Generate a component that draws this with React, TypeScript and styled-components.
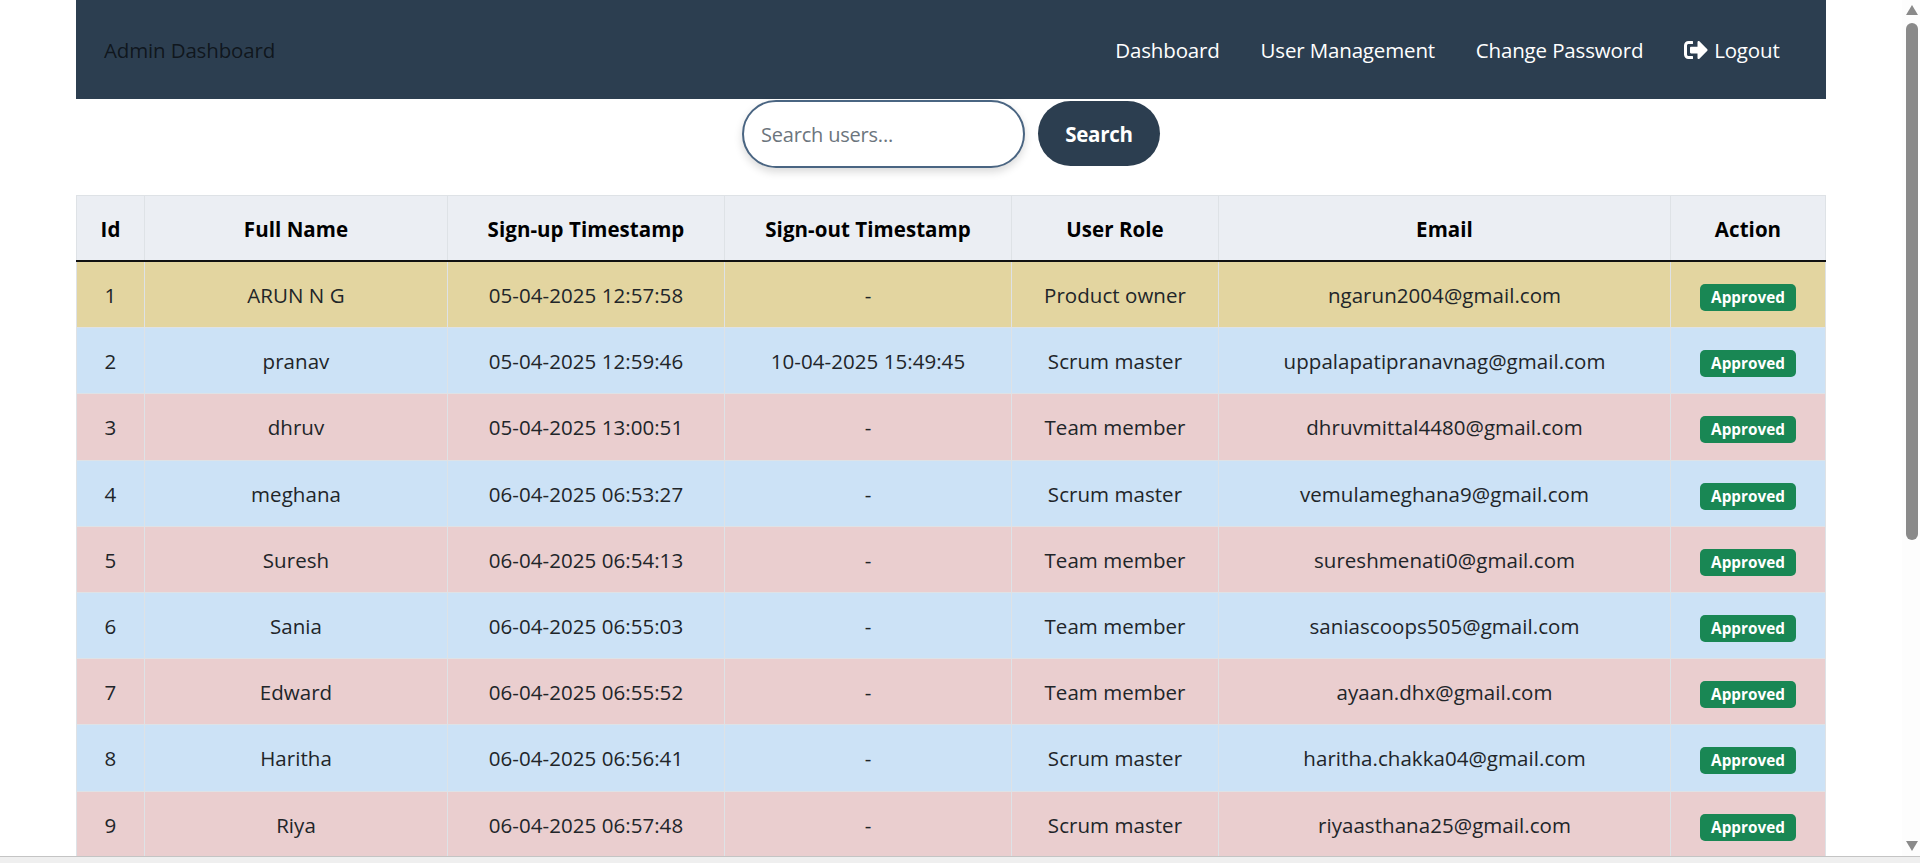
import React from "react";
import styled, { createGlobalStyle } from "styled-components";

const Global = createGlobalStyle`
  html, body { margin: 0; height: 100%; overflow: hidden; background: #fff; }
  body { font-family: "Open Sans", "Noto Sans", "Liberation Sans", sans-serif; color: #212529; }
  * { box-sizing: border-box; }
`;

const Page = styled.div`
  padding: 0 94px 0 76px;
`;
const NavBar = styled.nav`
  height: 99px;
  background: #2c3e50;
  display: flex;
  align-items: center;
  justify-content: space-between;
  padding: 0 26px 0 28px;
`;
const Brand = styled.div`
  font-size: 20.5px;
  letter-spacing: -0.15px;
  color: rgba(0, 0, 0, 0.65);
`;
const NavLinks = styled.div`
  display: flex;
  align-items: center;
`;
const NavLink = styled.a`
  font-size: 20.5px;
  letter-spacing: -0.15px;
  color: #fff;
  padding: 0 20.4px;
  display: flex;
  align-items: center;
  gap: 6px;
`;
const SearchRow = styled.form`
  height: 96px;
  display: flex;
  justify-content: center;
  gap: 13px;
  padding: 1px 0 0 0;
`;
const SearchInput = styled.input`
  width: 283px;
  height: 68px;
  border: 2px solid #4a6582;
  border-radius: 34px;
  padding: 0 17px;
  font: 20px "Open Sans", sans-serif;
  letter-spacing: -0.2px;
  outline: none;
  box-shadow: 0 4px 8px rgba(0, 0, 0, 0.15);
  &::placeholder { color: #6c757d; opacity: 1; }
`;
const SearchButton = styled.button`
  width: 122px;
  height: 65px;
  margin-top: 1px;
  border: 0;
  border-radius: 33px;
  background: #2c3e50;
  color: #fff;
  font: 700 20.5px "Open Sans", sans-serif;
  letter-spacing: -0.27px;
`;
const Table = styled.table`
  width: 1749px;
  table-layout: fixed;
  border-collapse: collapse;
  font-size: 20.5px;
  letter-spacing: 0.05px;
`;
const HeadCell = styled.th`
  height: 65px;
  background: #ebeef3;
  color: #000;
  font-weight: 700;
  text-align: center;
  padding: 2px 0 0;
  border: 1px solid #dee2e6;
  border-bottom: 2px solid #111;
`;
const Body = styled.tbody`
  tr:first-child td { height: 67.2px; }
`;
const Row = styled.tr<{ $tone: string }>`
  background: ${(p) => p.$tone};
`;
const Cell = styled.td`
  height: 66.2px;
  text-align: center;
  padding: 1px 0 0;
  color: #212529;
  border: 1px solid #dee2e6;
`;
const Badge = styled.span`
  display: inline-block;
  width: 96px;
  height: 27px;
  line-height: 27px;
  border-radius: 5px;
  background: #198754;
  color: #fff;
  font-size: 15.3px;
  font-weight: 700;
  letter-spacing: 0;
  vertical-align: middle;
  position: relative;
  top: 1px;
`;
const VTrack = styled.div`
  position: fixed;
  top: 0;
  right: 0;
  bottom: 7px;
  width: 18px;
  background: #fdfdfd;
`;
const VThumb = styled.div`
  position: absolute;
  top: 23px;
  left: 4px;
  width: 12px;
  height: 517px;
  border-radius: 6px;
  background: #8a8a8a;
`;
const ArrowUp = styled.div`
  position: absolute;
  top: 5px;
  left: 4px;
  border-left: 6px solid transparent;
  border-right: 6px solid transparent;
  border-bottom: 10px solid #8a8a8a;
`;
const ArrowDown = styled.div`
  position: absolute;
  bottom: 5px;
  left: 4px;
  border-left: 6px solid transparent;
  border-right: 6px solid transparent;
  border-top: 10px solid #8a8a8a;
`;
const HBar = styled.div`
  position: fixed;
  left: 0;
  right: 0;
  bottom: 0;
  height: 7px;
  background: #efefef;
  border-top: 1px solid #c4c4c4;
`;

const columns = [
  { title: "Id", w: 68 },
  { title: "Full Name", w: 303 },
  { title: "Sign-up Timestamp", w: 277 },
  { title: "Sign-out Timestamp", w: 287 },
  { title: "User Role", w: 207 },
  { title: "Email", w: 452 },
  { title: "Action", w: 155 },
];

const owner = "#e3d5a0";
const scrum = "#cce2f6";
const team = "#eacecf";

const rows = [
  [1, "ARUN N G", "05-04-2025 12:57:58", "-", "Product owner", "ngarun2004@gmail.com", owner],
  [2, "pranav", "05-04-2025 12:59:46", "10-04-2025 15:49:45", "Scrum master", "uppalapatipranavnag@gmail.com", scrum],
  [3, "dhruv", "05-04-2025 13:00:51", "-", "Team member", "dhruvmittal4480@gmail.com", team],
  [4, "meghana", "06-04-2025 06:53:27", "-", "Scrum master", "vemulameghana9@gmail.com", scrum],
  [5, "Suresh", "06-04-2025 06:54:13", "-", "Team member", "sureshmenati0@gmail.com", team],
  [6, "Sania", "06-04-2025 06:55:03", "-", "Team member", "saniascoops505@gmail.com", scrum],
  [7, "Edward", "06-04-2025 06:55:52", "-", "Team member", "ayaan.dhx@gmail.com", team],
  [8, "Haritha", "06-04-2025 06:56:41", "-", "Scrum master", "haritha.chakka04@gmail.com", scrum],
  [9, "Riya", "06-04-2025 06:57:48", "-", "Scrum master", "riyaasthana25@gmail.com", team],
] as const;

const LogoutIcon = () => (
  <svg width="24" height="24" viewBox="0 0 512 512" fill="#fff">
    <path d="M497 273L329 441c-15 15-41 4.5-41-17v-96H152c-13.3 0-24-10.7-24-24v-96c0-13.3 10.7-24 24-24h136V88c0-21.4 25.9-32 41-17l168 168c9.3 9.4 9.3 24.6 0 34zM192 436v-40c0-6.6-5.4-12-12-12H96c-17.7 0-32-14.3-32-32V160c0-17.7 14.3-32 32-32h84c6.6 0 12-5.4 12-12V76c0-6.6-5.4-12-12-12H96c-53 0-96 43-96 96v192c0 53 43 96 96 96h84c6.6 0 12-5.4 12-12z" />
  </svg>
);

export default function App() {
  return (
    <>
      <Global />
      <Page>
        <NavBar>
          <Brand>Admin Dashboard</Brand>
          <NavLinks>
            <NavLink>Dashboard</NavLink>
            <NavLink>User Management</NavLink>
            <NavLink>Change Password</NavLink>
            <NavLink><LogoutIcon /> Logout</NavLink>
          </NavLinks>
        </NavBar>
        <SearchRow>
          <SearchInput placeholder="Search users..." />
          <SearchButton type="button">Search</SearchButton>
        </SearchRow>
        <Table>
          <colgroup>
            {columns.map((c) => <col key={c.title} width={c.w} />)}
          </colgroup>
          <thead>
            <tr>{columns.map((c) => <HeadCell key={c.title}>{c.title}</HeadCell>)}</tr>
          </thead>
          <Body>
            {rows.map((r) => (
              <Row key={r[0]} $tone={r[6]}>
                <Cell>{r[0]}</Cell>
                <Cell>{r[1]}</Cell>
                <Cell>{r[2]}</Cell>
                <Cell>{r[3]}</Cell>
                <Cell>{r[4]}</Cell>
                <Cell>{r[5]}</Cell>
                <Cell><Badge>Approved</Badge></Cell>
              </Row>
            ))}
          </Body>
        </Table>
      </Page>
      <VTrack>
        <ArrowUp />
        <VThumb />
        <ArrowDown />
      </VTrack>
      <HBar />
    </>
  );
}
